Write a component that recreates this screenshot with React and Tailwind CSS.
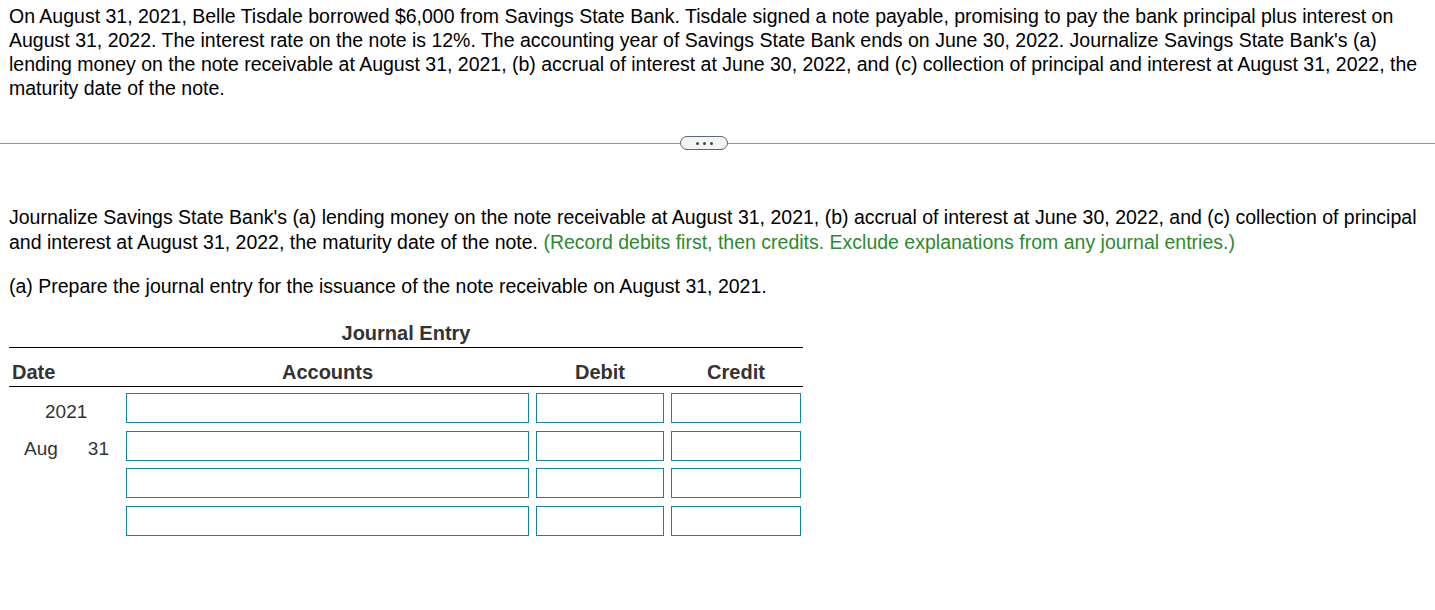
import React from 'react';

const rows = [0, 1, 2, 3];

export default function App() {
  return (
    <div className="min-h-screen bg-white text-black" style={{ fontFamily: '"Liberation Sans", Arial, sans-serif' }}>
      {/* question text */}
      <p className="pl-[9px] pr-[4px] pt-[4px] text-[19.5px] leading-[24px]">
        On August 31, 2021, Belle Tisdale borrowed $6,000 from Savings State Bank. Tisdale signed a note payable, promising to pay the bank principal plus interest on August 31, 2022. The interest rate on the note is 12%. The accounting year of Savings State Bank ends on June 30, 2022. Journalize Savings State Bank's (a) lending money on the note receivable at August 31, 2021, (b) accrual of interest at June 30, 2022, and (c) collection of principal and interest at August 31, 2022, the maturity date of the note.
      </p>

      {/* divider with collapse pill */}
      <div className="mt-[36px] flex items-center">
        <div className="h-px w-[680px] bg-[#8a94a0]" />
        <button className="flex h-[14px] w-[48px] items-center justify-center gap-[4px] rounded-full border border-[#5b6877] bg-[#f2f4f6]">
          <span className="h-[3px] w-[3px] rounded-full bg-[#444]" />
          <span className="h-[3px] w-[3px] rounded-full bg-[#444]" />
          <span className="h-[3px] w-[3px] rounded-full bg-[#444]" />
        </button>
        <div className="h-px flex-1 bg-[#8a94a0]" />
      </div>

      <p className="mt-[55px] pl-[9px] pr-[4px] text-[19.5px] leading-[25px]">
        Journalize Savings State Bank's (a) lending money on the note receivable at August 31, 2021, (b) accrual of interest at June 30, 2022, and (c) collection of principal and interest at August 31, 2022, the maturity date of the note.{' '}
        <span className="text-[#2b8a2b]">(Record debits first, then credits. Exclude explanations from any journal entries.)</span>
      </p>

      <p className="mt-[19px] pl-[9px] text-[19.5px] leading-[24px]">
        (a) Prepare the journal entry for the issuance of the note receivable on August 31, 2021.
      </p>

      {/* journal table */}
      <div className="ml-[9px] mt-[23px] w-[794px]">
        <div className="text-center text-[20px] font-bold leading-[24px] text-[#333]">Journal Entry</div>
        <div className="mt-[2px] h-px bg-black" />
        <div className="grid h-[38px] grid-cols-[110px_403px_128px_130px] gap-x-[7px] pt-[14px] text-[20px] font-bold leading-[20px] text-[#333]">
          <div className="pl-[3px]">Date</div>
          <div className="text-center">Accounts</div>
          <div className="text-center">Debit</div>
          <div className="text-center">Credit</div>
        </div>
        <div className="h-px bg-black" />
        <div className="mt-[6px] grid grid-cols-[110px_403px_128px_130px] gap-x-[7px] gap-y-[7.5px]">
          {rows.map((r) => (
            <React.Fragment key={r}>
              <div className="flex h-[30px] items-center pt-[8px] text-[19px] text-[#333]">
                {r === 0 && <span className="ml-[36px]">2021</span>}
                {r === 1 && (
                  <>
                    <span className="ml-[15px]">Aug</span>
                    <span className="ml-[30px]">31</span>
                  </>
                )}
              </div>
              <input className="h-[30px] border border-[#17839c] outline-none" />
              <input className="h-[30px] border border-[#17839c] outline-none" />
              <input className="h-[30px] border border-[#17839c] outline-none" />
            </React.Fragment>
          ))}
        </div>
      </div>
    </div>
  );
}
